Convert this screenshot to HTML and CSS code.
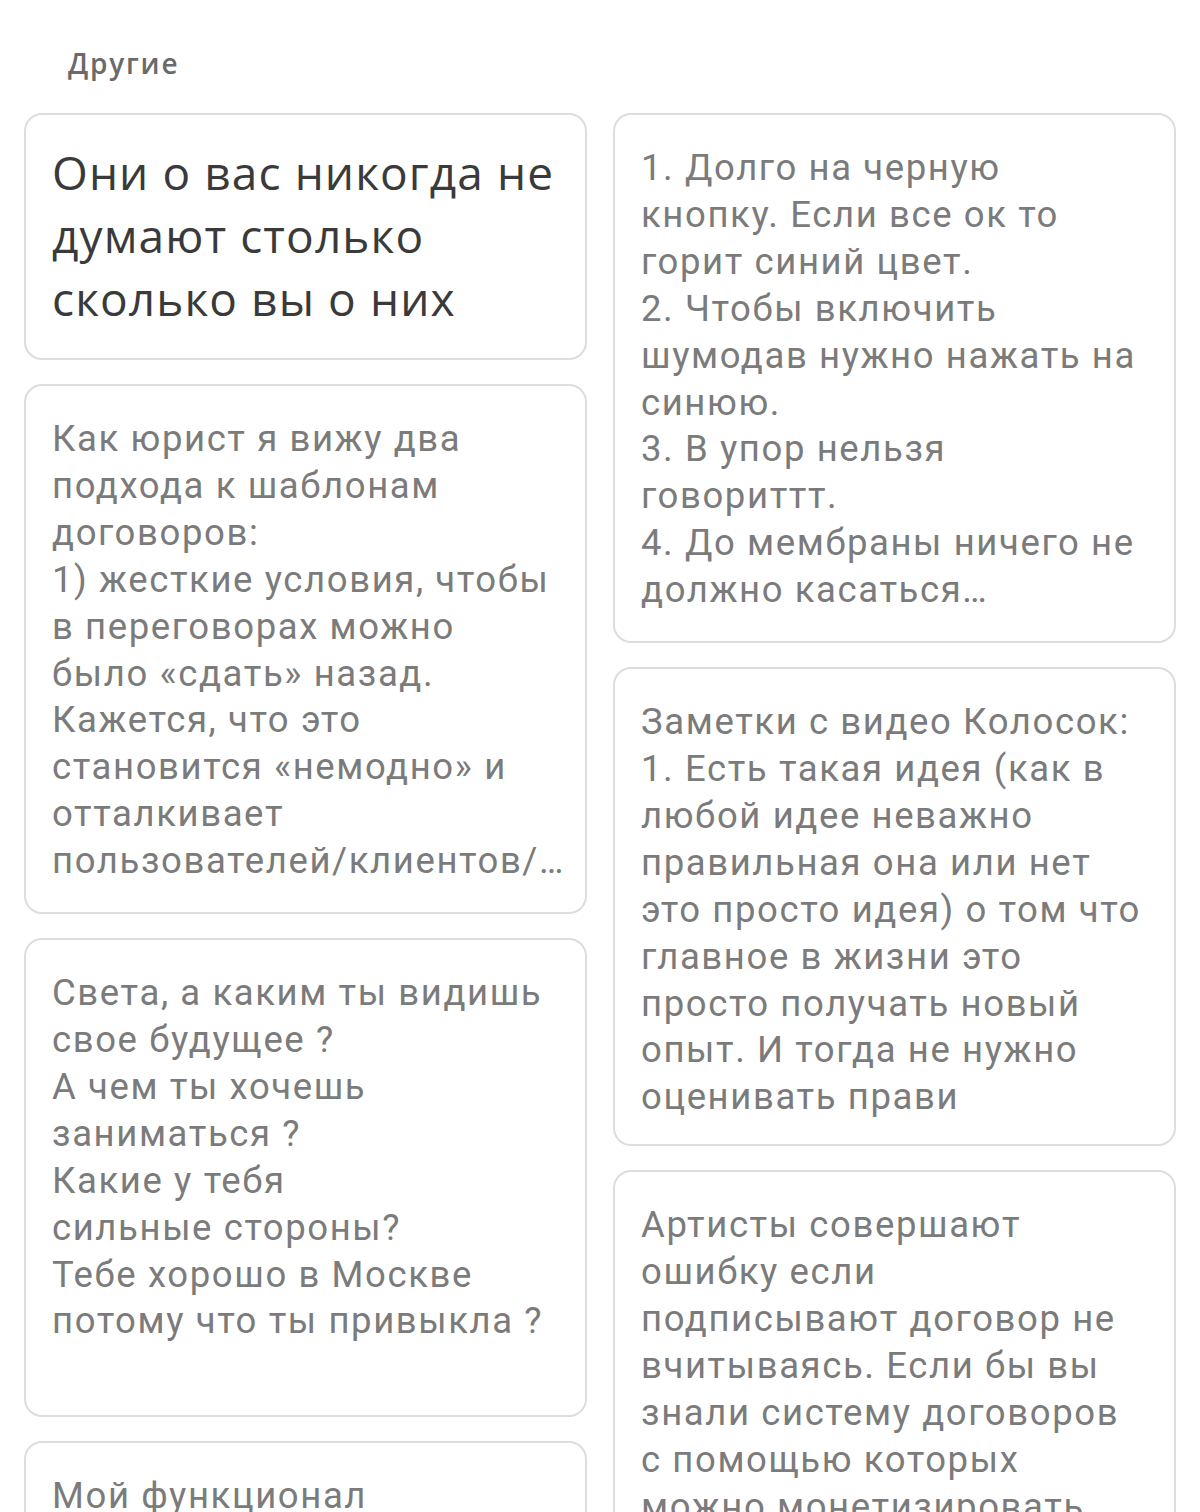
FILE: index.html
```html
<!DOCTYPE html>
<html lang="ru">
<head>
<meta charset="utf-8">
<title>Другие</title>
<link rel="stylesheet" href="styles.css">
</head>
<body>
<main class="page">
  <h2 class="section-title">Другие</h2>
  <div class="notes">
    <div class="column">
      <article class="note">
<p class="note-title">Они о вас никогда не
думают столько
сколько вы о них</p>
      </article>
      <article class="note">
<p class="note-text">Как юрист я вижу два
подхода к шаблонам
договоров:
1) жесткие условия, чтобы
в переговорах можно
было «сдать» назад.
Кажется, что это
становится «немодно» и
отталкивает
пользователей/клиентов/…</p>
      </article>
      <article class="note note--tail">
<p class="note-text">Света, а каким ты видишь
свое будущее ?
А чем ты хочешь
заниматься ?
Какие у тебя
сильные стороны?
Тебе хорошо в Москве
потому что ты привыкла ?</p>
      </article>
      <article class="note">
<p class="note-text">Мой функционал</p>
      </article>
    </div>
    <div class="column">
      <article class="note">
<p class="note-text">1. Долго на черную
кнопку. Если все ок то
горит синий цвет.
2. Чтобы включить
шумодав нужно нажать на
синюю.
3. В упор нельзя
говориттт.
4. До мембраны ничего не
должно касаться…</p>
      </article>
      <article class="note note--clipped">
<p class="note-text">Заметки с видео Колосок:
1. Есть такая идея (как в
любой идее неважно
правильная она или нет
это просто идея) о том что
главное в жизни это
просто получать новый
опыт. И тогда не нужно
оценивать прави</p>
      </article>
      <article class="note">
<p class="note-text">Артисты совершают
ошибку если
подписывают договор не
вчитываясь. Если бы вы
знали систему договоров
с помощью которых
можно монетизировать</p>
      </article>
    </div>
  </div>
</main>
</body>
</html>
```

FILE: styles.css
```css
* { box-sizing: border-box; }

html, body {
  margin: 0;
  padding: 0;
  background: #ffffff;
}

.page {
  padding: 0 24px;
}

.section-title {
  margin: 0;
  padding: 44px 0 0 44px;
  height: 113px;
  font-family: "Open Sans", "Noto Sans", sans-serif;
  font-weight: 600;
  font-size: 28px;
  line-height: 38px;
  color: #6a6a6a;
  letter-spacing: 1.8px;
}

.notes {
  display: grid;
  grid-template-columns: minmax(0, 1fr) minmax(0, 1fr);
  column-gap: 26px;
  align-items: start;
}

.column {
  display: flex;
  flex-direction: column;
  gap: 24px;
  min-width: 0;
}

.note {
  border: 2px solid #dcdde0;
  border-radius: 18px;
  padding: 30px 26px 27px;
  overflow: hidden;
}

.note--tail {
  padding-bottom: 70px;
}

.note--clipped {
  padding-bottom: 23px;
}

.note p {
  white-space: pre;
}

.note-title {
  margin: -4px 0 1px;
  font-family: "Open Sans", Lato, sans-serif;
  font-size: 46px;
  line-height: 63px;
  color: #3a3a3a;
  letter-spacing: 1.1px;
}

.note-text {
  margin: 0;
  font-family: Roboto, "Noto Sans", sans-serif;
  font-size: 36.5px;
  line-height: 46.9px;
  color: #7b7b7b;
  letter-spacing: 1.6px;
}
```
